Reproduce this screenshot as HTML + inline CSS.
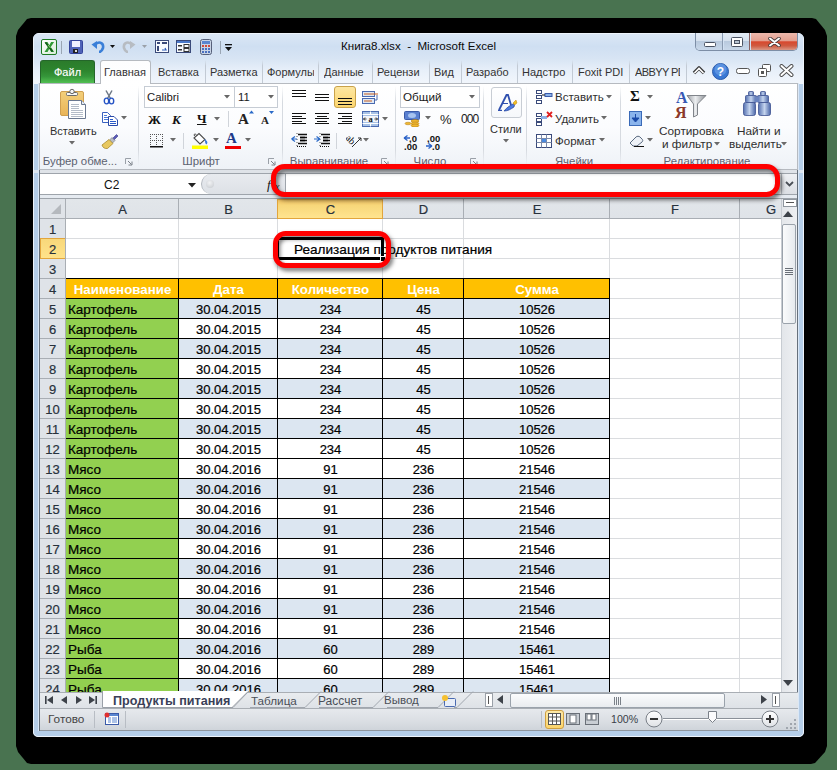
<!DOCTYPE html><html><head><meta charset="utf-8"><style>
*{box-sizing:border-box;margin:0;padding:0}
html,body{width:837px;height:770px;overflow:hidden;background:#497350;font-family:"Liberation Sans",sans-serif}
.abs{position:absolute}
.t{position:absolute;white-space:nowrap;line-height:1}
.g .t{-webkit-text-stroke:0.2px currentColor}
#shadow{position:absolute;left:16px;top:18px;width:811px;height:746px;background:#000;clip-path:polygon(0px 18px,1px 15px,2px 12px,11px 1px,15px 0px,796px 0px,800px 1px,809px 12px,810px 15px,811px 18px,811px 728px,810px 731px,809px 734px,799px 745px,795px 746px,15px 746px,11px 745px,2px 734px,1px 731px,0px 728px)}
#win{position:absolute;left:33px;top:33px;width:771px;height:704px;background:#b5cee9;border-radius:6px 6px 5px 5px;overflow:hidden}
.ui{font-size:11px;color:#3b3b3b}
.glabel{font-size:11.4px;color:#5c6270}
.cell{position:absolute;font-size:13.5px;color:#000;white-space:nowrap;line-height:20px;height:20px}
</style></head><body>
<div id="shadow"></div>
<div id="win"></div>
<div class="abs" style="left:0;top:0;width:837px;height:770px">
<div class="abs" style="left:34px;top:34px;width:769px;height:50px;background:linear-gradient(#dbe7f5,#cfdff2 25%,#d8e5f4 50%,#e7eff9 72%,#f2f6fc 100%);border-radius:5px 5px 0 0"></div>
<div class="abs" style="left:33px;top:33px;width:771px;height:704px;border:1px solid #eef4fb;border-radius:6px 6px 5px 5px"></div>
<svg class="abs" style="left:41px;top:39px" width="17" height="16" viewBox="0 0 17 16"><defs><linearGradient id="xl" x1="0" y1="0" x2="1" y2="1"><stop offset="0" stop-color="#ffffff"/><stop offset="1" stop-color="#d8ecd8"/></linearGradient></defs><rect x="0.5" y="0.5" width="15" height="15" rx="1.5" fill="url(#xl)" stroke="#1f7a24"/><path d="M3.5 3h3l1.8 3.2 1.8-3.2h3l-3.3 5 3.3 5h-3l-1.8-3.2-1.8 3.2h-3l3.3-5z" fill="#2f9a34"/><path d="M4.5 3.5 L11.5 12.5" stroke="#155a18" stroke-width="1.6"/><path d="M7 6 L9.5 9" stroke="#8adc70" stroke-width="1"/></svg>
<div class="abs" style="left:61px;top:41px;width:1px;height:13px;background:#9aa6b4"></div>
<svg class="abs" style="left:69px;top:40px" width="14" height="14" viewBox="0 0 14 14"><rect x="0.5" y="0.5" width="13" height="13" rx="1" fill="#4f63b8" stroke="#34449a"/><rect x="3" y="1" width="8" height="6" fill="#eef0ff"/><rect x="4" y="9" width="5" height="4" fill="#222"/><rect x="6" y="10" width="2" height="2" fill="#ddd"/></svg>
<svg class="abs" style="left:91px;top:40px" width="14" height="13" viewBox="0 0 14 13"><path d="M4 5 C7 1,13 2,12 8 C11 11,9 12,8 12" fill="none" stroke="#3a7fd8" stroke-width="2.6"/><path d="M0.5 4.5 L6 1 L6 9 Z" fill="#3a7fd8"/></svg>
<svg class="abs" style="left:110px;top:45px" width="6" height="4" viewBox="0 0 6 4"><path d="M0 0h5l-2.5 3z" fill="#111"/></svg>
<svg class="abs" style="left:122px;top:40px" width="14" height="13" viewBox="0 0 14 13"><path d="M10 5 C7 1,1 2,2 8 C3 11,5 12,6 12" fill="none" stroke="#b7bcc2" stroke-width="2.6"/><path d="M13.5 4.5 L8 1 L8 9 Z" fill="#b7bcc2"/></svg>
<svg class="abs" style="left:142px;top:45px" width="6" height="4" viewBox="0 0 6 4"><path d="M0 0h5l-2.5 3z" fill="#9aa0a8"/></svg>
<svg class="abs" style="left:155px;top:40px" width="14" height="13" viewBox="0 0 14 13"><rect x="0.5" y="0.5" width="13" height="12" fill="#f8fbff" stroke="#3a4a7a"/><rect x="2" y="2" width="3" height="2" fill="#3a4a7a"/><rect x="7" y="2" width="5" height="2" fill="#3a4a7a"/><rect x="2" y="6" width="2" height="5" fill="#3a4a7a"/><path d="M7 10h4l-1-2" fill="none" stroke="#2a5ab8" stroke-width="1.2"/></svg>
<svg class="abs" style="left:176px;top:40px" width="15" height="13" viewBox="0 0 15 13"><rect x="0.5" y="0.5" width="14" height="12" fill="#f8fbff" stroke="#3a4a7a"/><rect x="1" y="1" width="13" height="2" fill="#4a78c8"/><rect x="2" y="5" width="4" height="1.5" fill="#333"/><rect x="8" y="4.5" width="5" height="3" fill="none" stroke="#333"/><rect x="2" y="9" width="4" height="1.5" fill="#333"/><rect x="8" y="8.5" width="5" height="3" fill="none" stroke="#333"/></svg>
<svg class="abs" style="left:200px;top:39px" width="12" height="16" viewBox="0 0 12 16"><rect x="0.5" y="0.5" width="11" height="15" rx="2" fill="#c8d4e6" stroke="#56607a"/><rect x="2" y="2" width="8" height="3" fill="#5a86d0"/><g fill="#d04a3a"><rect x="2" y="6" width="2" height="2"/><rect x="5" y="6" width="2" height="2"/><rect x="8" y="6" width="2" height="2"/></g><g fill="#4a70c0"><rect x="2" y="9" width="2" height="2"/><rect x="5" y="9" width="2" height="2"/><rect x="8" y="9" width="2" height="2"/><rect x="2" y="12" width="2" height="2"/><rect x="5" y="12" width="2" height="2"/><rect x="8" y="12" width="2" height="2"/></g></svg>
<div class="abs" style="left:220px;top:41px;width:1px;height:13px;background:#9aa6b4"></div>
<svg class="abs" style="left:225px;top:44px" width="8" height="8" viewBox="0 0 8 8"><rect x="0" y="0" width="7" height="1.3" fill="#111"/><path d="M0 3h7l-3.5 4z" fill="#111"/></svg>
<div class="t" style="left:341px;top:40px;font-size:11.6px;color:#0a0a0a">Книга8.xlsx&nbsp; -&nbsp; Microsoft Excel</div>
<div class="abs" style="left:695px;top:33px;width:103px;height:18px;border:1px solid #7d8ea6;border-top:none;border-radius:0 0 5px 5px;overflow:hidden"><div class="abs" style="left:0;top:0;width:27px;height:17px;background:linear-gradient(#e3ebf5,#d6e1ee 45%,#b9cade 50%,#c9d8ea);border-right:1px solid #8a9ab0"></div><div class="abs" style="left:28px;top:0;width:26px;height:17px;background:linear-gradient(#e3ebf5,#d6e1ee 45%,#b9cade 50%,#c9d8ea);border-right:1px solid #8a6060"></div><div class="abs" style="left:55px;top:0;width:48px;height:17px;background:linear-gradient(#ecb8ac,#e3a090 45%,#d8482e 52%,#cf5a40 75%,#d99886)"></div></div>
<svg class="abs" style="left:704px;top:42px" width="12" height="5" viewBox="0 0 12 5"><rect x="0.5" y="0.5" width="11" height="4" rx="1" fill="#fff" stroke="#4a5262"/></svg>
<svg class="abs" style="left:731px;top:37px" width="12" height="10" viewBox="0 0 12 10"><rect x="0.5" y="0.5" width="11" height="9" rx="1" fill="#fff" stroke="#4a5262"/><rect x="3.5" y="3.5" width="5" height="3" fill="#b8c4d2" stroke="#4a5262"/></svg>
<svg class="abs" style="left:768px;top:37px" width="13" height="10" viewBox="0 0 13 10"><path d="M2 1.5 L11 8.5 M11 1.5 L2 8.5" stroke="#4a3a3a" stroke-width="3.6" stroke-linecap="round"/><path d="M2 1.5 L11 8.5 M11 1.5 L2 8.5" stroke="#fff" stroke-width="2" stroke-linecap="round"/></svg>
<div class="abs" style="left:40px;top:60px;width:55px;height:23px;background:linear-gradient(#2b7b2b,#2d862e 45%,#35963a 70%,#52c052 100%);border:1px solid #24662a;border-bottom:none;border-radius:3px 3px 0 0"></div>
<div class="t" style="left:54px;top:67px;font-size:11px;color:#fff;text-shadow:0 0 1px rgba(255,255,255,.4)">Файл</div>
<div class="abs" style="left:100px;top:60px;width:51px;height:24px;background:linear-gradient(#fdfdfe,#fff);border:1px solid #b6bac0;border-bottom:none;border-radius:3px 3px 0 0;z-index:2"></div>
<div class="t" style="left:104px;top:67px;font-size:11px;color:#333;z-index:3">Главная</div>
<div class="t" style="left:158px;top:67px;font-size:11px;color:#333;width:45px;overflow:hidden">Вставка</div>
<div class="abs" style="left:205px;top:60px;width:1px;height:23px;background:linear-gradient(rgba(200,208,218,0),#c2cad4 25%,#c2cad4)"></div>
<div class="t" style="left:210px;top:67px;font-size:11px;color:#333;width:48px;overflow:hidden">Разметка</div>
<div class="abs" style="left:262px;top:60px;width:1px;height:23px;background:linear-gradient(rgba(200,208,218,0),#c2cad4 25%,#c2cad4)"></div>
<div class="t" style="left:267px;top:67px;font-size:11px;color:#333;width:47px;overflow:hidden">Формулы</div>
<div class="abs" style="left:318px;top:60px;width:1px;height:23px;background:linear-gradient(rgba(200,208,218,0),#c2cad4 25%,#c2cad4)"></div>
<div class="t" style="left:324px;top:67px;font-size:11px;color:#333;width:46px;overflow:hidden">Данные</div>
<div class="abs" style="left:372px;top:60px;width:1px;height:23px;background:linear-gradient(rgba(200,208,218,0),#c2cad4 25%,#c2cad4)"></div>
<div class="t" style="left:377px;top:67px;font-size:11px;color:#333;width:50px;overflow:hidden">Рецензи</div>
<div class="abs" style="left:429px;top:60px;width:1px;height:23px;background:linear-gradient(rgba(200,208,218,0),#c2cad4 25%,#c2cad4)"></div>
<div class="t" style="left:434px;top:67px;font-size:11px;color:#333;width:25px;overflow:hidden">Вид</div>
<div class="abs" style="left:461px;top:60px;width:1px;height:23px;background:linear-gradient(rgba(200,208,218,0),#c2cad4 25%,#c2cad4)"></div>
<div class="t" style="left:466px;top:67px;font-size:11px;color:#333;width:49px;overflow:hidden">Разрабо</div>
<div class="abs" style="left:517px;top:60px;width:1px;height:23px;background:linear-gradient(rgba(200,208,218,0),#c2cad4 25%,#c2cad4)"></div>
<div class="t" style="left:522px;top:67px;font-size:11px;color:#333;width:48px;overflow:hidden">Надстро</div>
<div class="abs" style="left:572px;top:60px;width:1px;height:23px;background:linear-gradient(rgba(200,208,218,0),#c2cad4 25%,#c2cad4)"></div>
<div class="t" style="left:578px;top:67px;font-size:11px;color:#333;width:49px;overflow:hidden">Foxit PDI</div>
<div class="abs" style="left:629px;top:60px;width:1px;height:23px;background:linear-gradient(rgba(200,208,218,0),#c2cad4 25%,#c2cad4)"></div>
<div class="t" style="left:635px;top:67px;font-size:11px;color:#333;width:45px;overflow:hidden;letter-spacing:-0.6px">ABBYY PD</div>
<div class="abs" style="left:686px;top:60px;width:1px;height:23px;background:linear-gradient(rgba(200,208,218,0),#c2cad4 25%,#c2cad4)"></div>
<svg class="abs" style="left:692px;top:65px" width="14" height="10" viewBox="0 0 14 10"><path d="M2 8 L7 3 L12 8" fill="none" stroke="#3a3a3a" stroke-width="3.6" stroke-linejoin="round"/><path d="M2.5 8 L7 3.5 L11.5 8" fill="none" stroke="#fff" stroke-width="1.6"/></svg>
<svg class="abs" style="left:712px;top:63px" width="17" height="17" viewBox="0 0 17 17"><circle cx="8.5" cy="8.5" r="8" fill="#3a78d4" stroke="#2a5aa8"/><circle cx="8.5" cy="6.5" r="6" fill="#6fa4ea" opacity=".6"/><text x="8.5" y="13" font-size="12" font-weight="700" text-anchor="middle" fill="#fff" font-family="Liberation Sans">?</text></svg>
<svg class="abs" style="left:736px;top:68px" width="14" height="6" viewBox="0 0 14 6"><rect x="0.5" y="0.5" width="13" height="5" rx="2" fill="#fff" stroke="#555"/></svg>
<svg class="abs" style="left:758px;top:64px" width="13" height="13" viewBox="0 0 13 13"><rect x="4.5" y="0.5" width="8" height="7" rx="1" fill="#fff" stroke="#555"/><rect x="0.5" y="4.5" width="8" height="8" rx="1" fill="#fff" stroke="#555"/><rect x="3" y="7" width="3" height="3" fill="#555"/></svg>
<svg class="abs" style="left:779px;top:64px" width="15" height="13" viewBox="0 0 15 13"><path d="M2.5 2 L12.5 11 M12.5 2 L2.5 11" stroke="#505050" stroke-width="4" stroke-linecap="round"/><path d="M2.5 2 L12.5 11 M12.5 2 L2.5 11" stroke="#fff" stroke-width="2" stroke-linecap="round"/></svg>
<div class="abs" style="left:39px;top:83px;width:759px;height:87px;background:linear-gradient(#fff,#fbfcfe 50%,#eef2f7);border:1px solid #b6bac0;z-index:1"></div>
<div class="abs" style="left:34px;top:170px;width:769px;height:3px;background:#dde5ee"></div>
<div class="abs" style="left:138px;top:86px;width:1px;height:80px;background:linear-gradient(rgba(220,224,230,0),#d6dae0 20%,#d6dae0 80%,rgba(220,224,230,0));z-index:2"></div>
<div class="abs" style="left:282px;top:86px;width:1px;height:80px;background:linear-gradient(rgba(220,224,230,0),#d6dae0 20%,#d6dae0 80%,rgba(220,224,230,0));z-index:2"></div>
<div class="abs" style="left:395px;top:86px;width:1px;height:80px;background:linear-gradient(rgba(220,224,230,0),#d6dae0 20%,#d6dae0 80%,rgba(220,224,230,0));z-index:2"></div>
<div class="abs" style="left:483px;top:86px;width:1px;height:80px;background:linear-gradient(rgba(220,224,230,0),#d6dae0 20%,#d6dae0 80%,rgba(220,224,230,0));z-index:2"></div>
<div class="abs" style="left:526px;top:86px;width:1px;height:80px;background:linear-gradient(rgba(220,224,230,0),#d6dae0 20%,#d6dae0 80%,rgba(220,224,230,0));z-index:2"></div>
<div class="abs" style="left:620px;top:86px;width:1px;height:80px;background:linear-gradient(rgba(220,224,230,0),#d6dae0 20%,#d6dae0 80%,rgba(220,224,230,0));z-index:2"></div>
<div class="t glabel" style="left:20px;width:120px;text-align:center;top:156px;z-index:3">Буфер обме...</div>
<div class="t glabel" style="left:141px;width:120px;text-align:center;top:156px;z-index:3">Шрифт</div>
<div class="t glabel" style="left:269px;width:120px;text-align:center;top:156px;z-index:3">Выравнивание</div>
<div class="t glabel" style="left:370px;width:120px;text-align:center;top:156px;z-index:3">Число</div>
<div class="t glabel" style="left:514px;width:120px;text-align:center;top:156px;z-index:3">Ячейки</div>
<div class="t glabel" style="left:647px;width:120px;text-align:center;top:156px;z-index:3">Редактирование</div>
<svg class="abs" style="left:125px;top:158px;z-index:3" width="8" height="8" viewBox="0 0 8 8"><path d="M0.5 6V0.5H6" stroke="#9aa0a8" fill="none"/><path d="M3 3L6.5 6.5M7 3.5v3.5h-3.5" stroke="#7a8088" fill="none"/></svg>
<svg class="abs" style="left:268px;top:158px;z-index:3" width="8" height="8" viewBox="0 0 8 8"><path d="M0.5 6V0.5H6" stroke="#9aa0a8" fill="none"/><path d="M3 3L6.5 6.5M7 3.5v3.5h-3.5" stroke="#7a8088" fill="none"/></svg>
<svg class="abs" style="left:381px;top:158px;z-index:3" width="8" height="8" viewBox="0 0 8 8"><path d="M0.5 6V0.5H6" stroke="#9aa0a8" fill="none"/><path d="M3 3L6.5 6.5M7 3.5v3.5h-3.5" stroke="#7a8088" fill="none"/></svg>
<svg class="abs" style="left:470px;top:158px;z-index:3" width="8" height="8" viewBox="0 0 8 8"><path d="M0.5 6V0.5H6" stroke="#9aa0a8" fill="none"/><path d="M3 3L6.5 6.5M7 3.5v3.5h-3.5" stroke="#7a8088" fill="none"/></svg>
<svg class="abs" style="left:59px;top:88px;z-index:3" width="29" height="32" viewBox="0 0 29 32"><defs><linearGradient id="cb" x1="0" y1="0" x2="0" y2="1"><stop offset="0" stop-color="#f3cf7a"/><stop offset="1" stop-color="#e8b458"/></linearGradient></defs><rect x="1.5" y="3.5" width="23" height="24" rx="1.5" fill="url(#cb)" stroke="#cf9f50"/><rect x="7.5" y="4.5" width="11" height="3" rx="1" fill="#f6f6f6" stroke="#6a6a6a"/><circle cx="13" cy="3.5" r="2.2" fill="#f6f6f6" stroke="#6a6a6a"/><path d="M9.5 12.5H22.5L26.5 16.5V30.5H9.5Z" fill="#fff" stroke="#6a7890"/><path d="M22.5 12.5V16.5H26.5" fill="#e8ecf2" stroke="#6a7890"/><g stroke="#b4bcc8"><path d="M12 16.5h8M12 18.5h8M12 20.5h8M12 22.5h12M12 24.5h12M12 26.5h12M12 28.5h12"/></g></svg>
<div class="t" style="left:50px;top:126px;font-size:11px;color:#2f2f2f;z-index:3">Вставить</div>
<svg class="abs" style="left:69px;top:141px;z-index:3" width="7" height="4" viewBox="0 0 7 4"><path d="M0 0h6l-3 3.5z" fill="#6a6a6a"/></svg>
<svg class="abs" style="left:103px;top:90px;z-index:3" width="12" height="15" viewBox="0 0 12 15"><path d="M3 0.5 L7.5 8.5 M9 0.5 L4.5 8.5" stroke="#6e7886" stroke-width="1.5"/><ellipse cx="3.5" cy="11" rx="2.2" ry="2.9" fill="none" stroke="#2452c4" stroke-width="1.4"/><ellipse cx="8.5" cy="11" rx="2.2" ry="2.9" fill="none" stroke="#2452c4" stroke-width="1.4"/></svg>
<svg class="abs" style="left:102px;top:112px;z-index:3" width="16" height="14" viewBox="0 0 16 14"><path d="M0.5 0.5H5.5L8.5 3.5V10.5H0.5Z" fill="#fff" stroke="#3a62c0"/><path d="M2 3.5h3M2 5.5h5M2 7.5h5" stroke="#4a7ad8"/><path d="M6.5 4.5H12L15.5 8V13.5H6.5Z" fill="#fff" stroke="#2a4aa8"/><path d="M8 7.5h3M8 9.5h6M8 11.5h6" stroke="#2a5ac8" stroke-width="1.2"/></svg>
<svg class="abs" style="left:121px;top:116px;z-index:3" width="7" height="4" viewBox="0 0 7 4"><path d="M0 0h6l-3 3.5z" fill="#6a6a6a"/></svg>
<svg class="abs" style="left:101px;top:133px;z-index:3" width="18" height="16" viewBox="0 0 18 16"><path d="M11 6 L15.5 1.5 L17 3 L12.5 7.5Z" fill="#5a5ab8" stroke="#3a3a88" stroke-width=".6"/><path d="M8.5 7 L11 4.5 L14 7.5 L11.5 10Z" fill="#b8bcc4" stroke="#6a6e78" stroke-width=".6"/><path d="M1 12 L8 6.5 L12 10.5 L6.5 15.5 C4 16,1.5 14.5,1 12Z" fill="#e8c860" stroke="#a88a30" stroke-width=".8"/></svg>
<div class="abs" style="left:144px;top:86px;width:91px;height:22px;background:#fff;border:1px solid #c6ccd4;z-index:3"></div>
<div class="abs" style="left:234px;top:86px;width:44px;height:22px;background:#fff;border:1px solid #c6ccd4;z-index:3"></div>
<div class="t" style="left:147px;top:92px;font-size:11.3px;color:#1a1a1a;z-index:3">Calibri</div>
<svg class="abs" style="left:224px;top:95px;z-index:3" width="7" height="4" viewBox="0 0 7 4"><path d="M0 0h6l-3 3.5z" fill="#666"/></svg>
<div class="t" style="left:238px;top:92px;font-size:11.3px;color:#1a1a1a;z-index:3">11</div>
<svg class="abs" style="left:268px;top:95px;z-index:3" width="7" height="4" viewBox="0 0 7 4"><path d="M0 0h6l-3 3.5z" fill="#666"/></svg>
<div class="t" style="left:148px;top:113px;font-size:13px;color:#111;z-index:3;font-family:Liberation Serif;font-weight:700">Ж</div>
<div class="t" style="left:172px;top:113px;font-size:13px;color:#111;z-index:3;font-family:Liberation Serif;font-weight:700;font-style:italic">К</div>
<div class="t" style="left:197px;top:112px;font-size:13px;color:#111;z-index:3;font-family:Liberation Serif;font-weight:700;text-decoration:underline">Ч</div>
<svg class="abs" style="left:214px;top:117px;z-index:3" width="7" height="4" viewBox="0 0 7 4"><path d="M0 0h6l-3 3.5z" fill="#6a6a6a"/></svg>
<div class="abs" style="left:228px;top:111px;width:1px;height:16px;background:#d0d4da;z-index:3"></div>
<div class="t" style="left:238px;top:112px;font-size:15px;color:#222;z-index:3;font-family:Liberation Serif;font-weight:700">A</div>
<svg class="abs" style="left:249px;top:110px;z-index:3" width="5" height="4" viewBox="0 0 5 4"><path d="M0 3.5h5l-2.5-3z" fill="#2a6ac8"/></svg>
<div class="t" style="left:261px;top:115px;font-size:11px;color:#222;z-index:3;font-family:Liberation Serif;font-weight:700">A</div>
<svg class="abs" style="left:269px;top:111px;z-index:3" width="5" height="4" viewBox="0 0 5 4"><path d="M0 0h5l-2.5 3z" fill="#2a6ac8"/></svg>
<svg class="abs" style="left:150px;top:134px;z-index:3" width="13" height="14" viewBox="0 0 13 14"><g fill="#555"><rect x="0" y="0" width="1" height="1"/><rect x="2" y="0" width="1" height="1"/><rect x="4" y="0" width="1" height="1"/><rect x="6" y="0" width="1" height="1"/><rect x="8" y="0" width="1" height="1"/><rect x="10" y="0" width="1" height="1"/><rect x="12" y="0" width="1" height="1"/><rect x="0" y="6" width="1" height="1"/><rect x="2" y="6" width="1" height="1"/><rect x="4" y="6" width="1" height="1"/><rect x="6" y="6" width="1" height="1"/><rect x="8" y="6" width="1" height="1"/><rect x="10" y="6" width="1" height="1"/><rect x="12" y="6" width="1" height="1"/><rect x="0" y="0" width="1" height="1"/><rect x="6" y="0" width="1" height="1"/><rect x="12" y="0" width="1" height="1"/><rect x="0" y="2" width="1" height="1"/><rect x="6" y="2" width="1" height="1"/><rect x="12" y="2" width="1" height="1"/><rect x="0" y="4" width="1" height="1"/><rect x="6" y="4" width="1" height="1"/><rect x="12" y="4" width="1" height="1"/><rect x="0" y="6" width="1" height="1"/><rect x="6" y="6" width="1" height="1"/><rect x="12" y="6" width="1" height="1"/><rect x="0" y="8" width="1" height="1"/><rect x="6" y="8" width="1" height="1"/><rect x="12" y="8" width="1" height="1"/><rect x="0" y="10" width="1" height="1"/><rect x="6" y="10" width="1" height="1"/><rect x="12" y="10" width="1" height="1"/></g><rect x="0" y="12" width="13" height="1.5" fill="#111"/></svg>
<svg class="abs" style="left:170px;top:138px;z-index:3" width="7" height="4" viewBox="0 0 7 4"><path d="M0 0h6l-3 3.5z" fill="#6a6a6a"/></svg>
<div class="abs" style="left:183px;top:133px;width:1px;height:16px;background:#d0d4da;z-index:3"></div>
<svg class="abs" style="left:191px;top:132px;z-index:3" width="18" height="17" viewBox="0 0 18 17"><path d="M3 6 L8 1.5 L14 7.5 L9 12 Z" fill="#fff" stroke="#4a4a4a" stroke-width="1.1"/><path d="M6 3.5 C4 1,2.5 2,3.5 4" fill="none" stroke="#4a4a4a"/><path d="M13 7 C16 8,17 10,16 12 C15 13,14 11,14 9Z" fill="#3a7ad8"/><rect x="1" y="13.5" width="16" height="3.5" fill="#ffff00"/></svg>
<svg class="abs" style="left:213px;top:138px;z-index:3" width="7" height="4" viewBox="0 0 7 4"><path d="M0 0h6l-3 3.5z" fill="#6a6a6a"/></svg>
<div class="t" style="left:226px;top:131px;font-size:15px;color:#1d3a8a;z-index:3;font-family:Liberation Serif;font-weight:700">A</div>
<div class="abs" style="left:225px;top:146px;width:16px;height:3px;background:#e00;z-index:3"></div>
<svg class="abs" style="left:245px;top:138px;z-index:3" width="7" height="4" viewBox="0 0 7 4"><path d="M0 0h6l-3 3.5z" fill="#6a6a6a"/></svg>
<svg class="abs" style="left:292px;top:90px;z-index:3" width="14" height="8" viewBox="0 0 14 8"><rect x="0" y="0" width="14" height="1" fill="#111"/><rect x="0" y="3" width="14" height="1" fill="#111"/><rect x="0" y="6" width="14" height="1" fill="#111"/></svg>
<svg class="abs" style="left:315px;top:94px;z-index:3" width="14" height="8" viewBox="0 0 14 8"><rect x="0" y="0" width="14" height="1" fill="#111"/><rect x="0" y="3" width="14" height="1" fill="#111"/><rect x="0" y="6" width="14" height="1" fill="#111"/></svg>
<div class="abs" style="left:334px;top:86px;width:22px;height:22px;background:linear-gradient(#fde7a2,#fcd56e);border:1px solid #c9a24a;border-radius:3px;z-index:3"></div>
<svg class="abs" style="left:338px;top:98px;z-index:3" width="14" height="8" viewBox="0 0 14 8"><rect x="0" y="0" width="14" height="1" fill="#111"/><rect x="0" y="3" width="14" height="1" fill="#111"/><rect x="0" y="6" width="14" height="1" fill="#111"/></svg>
<svg class="abs" style="left:362px;top:89px;z-index:3" width="17" height="16" viewBox="0 0 17 16"><rect x="0.5" y="2.5" width="12" height="5" fill="#dfe8f4" stroke="#4a6ab0"/><rect x="0.5" y="9.5" width="12" height="5" fill="#dfe8f4" stroke="#4a6ab0"/><path d="M2 5h14" stroke="#c86020"/><path d="M2 12h8" stroke="#c86020"/><path d="M15 6v5h-3" fill="none" stroke="#4a6ab0"/></svg>
<svg class="abs" style="left:292px;top:113px;z-index:3" width="14" height="12" viewBox="0 0 14 12"><rect x="0" y="0" width="14" height="1" fill="#111"/><rect x="0" y="3" width="10" height="1" fill="#111"/><rect x="0" y="5" width="14" height="1" fill="#111"/><rect x="0" y="8" width="10" height="1" fill="#111"/><rect x="0" y="10" width="14" height="1" fill="#111"/></svg>
<svg class="abs" style="left:315px;top:113px;z-index:3" width="14" height="12" viewBox="0 0 14 12"><rect x="0" y="0" width="14" height="1" fill="#111"/><rect x="2" y="3" width="10" height="1" fill="#111"/><rect x="0" y="5" width="14" height="1" fill="#111"/><rect x="2" y="8" width="10" height="1" fill="#111"/><rect x="0" y="10" width="14" height="1" fill="#111"/></svg>
<svg class="abs" style="left:338px;top:113px;z-index:3" width="14" height="12" viewBox="0 0 14 12"><rect x="0" y="0" width="14" height="1" fill="#111"/><rect x="4" y="3" width="10" height="1" fill="#111"/><rect x="0" y="5" width="14" height="1" fill="#111"/><rect x="4" y="8" width="10" height="1" fill="#111"/><rect x="0" y="10" width="14" height="1" fill="#111"/></svg>
<svg class="abs" style="left:362px;top:111px;z-index:3" width="17" height="16" viewBox="0 0 17 16"><rect x="0.5" y="0.5" width="16" height="15" fill="#a8c2e6" stroke="#4a6ab0"/><path d="M0.5 3.5h16M0.5 12.5h16M8.5 0.5v3M8.5 12.5v3" stroke="#fff"/><rect x="1" y="5" width="15" height="6" fill="#f4f6fa"/><text x="8.5" y="10.6" font-size="8.5" font-weight="700" text-anchor="middle" fill="#111" font-family="Liberation Serif">a</text><path d="M1.5 8h3M12.5 8h3M1.5 8l1.5-1.5M1.5 8l1.5 1.5M15.5 8l-1.5-1.5M15.5 8l-1.5 1.5" stroke="#222" stroke-width=".9"/></svg>
<svg class="abs" style="left:382px;top:117px;z-index:3" width="7" height="4" viewBox="0 0 7 4"><path d="M0 0h6l-3 3.5z" fill="#6a6a6a"/></svg>
<svg class="abs" style="left:291px;top:133px;z-index:3" width="16" height="15" viewBox="0 0 16 15"><path d="M7 1.5h9M9 4.5h7M9 7.5h7M7 10.5h9" stroke="#111" stroke-width="1.3"/><path d="M9 4.5h5M9 7.5h5" stroke="#000" stroke-width="1.6"/><path d="M6 13.5h10" stroke="#111" stroke-dasharray="1 1"/><path d="M6 0v15" stroke="#555" stroke-dasharray="1 2"/><path d="M0.5 6 L4 3.5 M0.5 6 L4 8.5 M0.5 6H6" stroke="#2a6ac8" stroke-width="1.2" fill="none"/></svg>
<svg class="abs" style="left:314px;top:133px;z-index:3" width="16" height="15" viewBox="0 0 16 15"><path d="M7 1.5h9M9 4.5h7M9 7.5h7M7 10.5h9" stroke="#111" stroke-width="1.3"/><path d="M9 4.5h5M9 7.5h5" stroke="#000" stroke-width="1.6"/><path d="M6 13.5h10" stroke="#111" stroke-dasharray="1 1"/><path d="M6 0v15" stroke="#555" stroke-dasharray="1 2"/><path d="M6 6 L2.5 3.5 M6 6 L2.5 8.5 M0 6H6" stroke="#2a6ac8" stroke-width="1.2" fill="none"/></svg>
<div class="abs" style="left:336px;top:133px;width:1px;height:16px;background:#d0d4da;z-index:3"></div>
<svg class="abs" style="left:346px;top:133px;z-index:3" width="17" height="15" viewBox="0 0 17 15"><text x="0" y="11" font-size="10" font-weight="400" fill="#111" transform="rotate(45 6 7)" font-family="Liberation Serif">ab</text><path d="M6 14 L15 5" stroke="#333"/><path d="M15 5l-3 0 M15 5l0 3" stroke="#333"/></svg>
<svg class="abs" style="left:363px;top:138px;z-index:3" width="7" height="4" viewBox="0 0 7 4"><path d="M0 0h6l-3 3.5z" fill="#6a6a6a"/></svg>
<div class="abs" style="left:400px;top:86px;width:80px;height:22px;background:#fff;border:1px solid #c6ccd4;z-index:3"></div>
<div class="t" style="left:403px;top:91px;font-size:11.7px;color:#1a1a1a;z-index:3">Общий</div>
<svg class="abs" style="left:469px;top:95px;z-index:3" width="7" height="4" viewBox="0 0 7 4"><path d="M0 0h6l-3 3.5z" fill="#666"/></svg>
<svg class="abs" style="left:404px;top:111px;z-index:3" width="17" height="16" viewBox="0 0 17 16"><rect x="0.5" y="0.5" width="15" height="8" rx="1" fill="#5a80d0" stroke="#3a5aa8"/><ellipse cx="8" cy="4.5" rx="4" ry="2.5" fill="#a8c4f0"/><g fill="#f0b830" stroke="#b07810" stroke-width=".5"><ellipse cx="11" cy="10" rx="4" ry="1.5"/><ellipse cx="11" cy="12.5" rx="4" ry="1.5"/><ellipse cx="11" cy="14.5" rx="4" ry="1.5"/><ellipse cx="4" cy="12.5" rx="3" ry="1.3"/></g></svg>
<svg class="abs" style="left:425px;top:116px;z-index:3" width="7" height="4" viewBox="0 0 7 4"><path d="M0 0h6l-3 3.5z" fill="#6a6a6a"/></svg>
<div class="t" style="left:440px;top:113px;font-size:13px;color:#222;z-index:3">%</div>
<div class="t" style="left:461px;top:113px;font-size:12px;color:#222;z-index:3;letter-spacing:-0.9px">000</div>
<svg class="abs" style="left:403px;top:134px;z-index:3" width="20" height="16" viewBox="0 0 20 16"><path d="M1 4 L4.5 1.5 M1 4 L4.5 6.5 M1 4h6" stroke="#2a62c8" stroke-width="1.3" fill="none"/><text x="6" y="8" font-size="9.5" font-weight="700" fill="#111" font-family="Liberation Sans">,0</text><text x="1" y="15.5" font-size="9.5" font-weight="700" fill="#111" font-family="Liberation Sans">,00</text></svg>
<svg class="abs" style="left:425px;top:134px;z-index:3" width="20" height="16" viewBox="0 0 20 16"><text x="2" y="8" font-size="9.5" font-weight="700" fill="#111" font-family="Liberation Sans">,00</text><path d="M1 12h6 M7 12 L3.5 9.5 M7 12 L3.5 14.5" stroke="#2a62c8" stroke-width="1.3" fill="none"/><text x="7" y="15.5" font-size="9.5" font-weight="700" fill="#111" font-family="Liberation Sans">,0</text></svg>
<div class="abs" style="left:491px;top:87px;width:31px;height:31px;background:linear-gradient(#fff,#f6f8fb);border:1px solid #c8cdd4;border-radius:3px;z-index:3"></div>
<svg class="abs" style="left:498px;top:94px;z-index:3" width="20" height="18" viewBox="0 0 20 18"><path d="M1 16 L8.5 1 L10 1 L13 11" fill="none" stroke="#2f4fae" stroke-width="1.8"/><path d="M0 16.3h4M5 9.5h5" stroke="#2f4fae" stroke-width="1.2"/><path d="M6 17 C9 13,13 11,17 9 L16 13 C13 15,10 17,6 17Z" fill="#4a7ae0" stroke="#24409a" stroke-width=".7"/><path d="M15 9 L18 6 L19 9 L16.5 11Z" fill="#f0c020" stroke="#c08010" stroke-width=".5"/></svg>
<div class="t" style="left:490px;top:124px;font-size:11px;color:#2f2f2f;z-index:3">Стили</div>
<svg class="abs" style="left:503px;top:139px;z-index:3" width="7" height="4" viewBox="0 0 7 4"><path d="M0 0h6l-3 3.5z" fill="#6a6a6a"/></svg>
<svg class="abs" style="left:536px;top:90px;z-index:3" width="17" height="14" viewBox="0 0 17 14"><rect x="0.5" y="0.5" width="5" height="3" fill="#fff" stroke="#3a4a7a"/><rect x="0.5" y="5.5" width="5" height="3" fill="#fff" stroke="#3a4a7a"/><rect x="0.5" y="10.5" width="5" height="3" fill="#fff" stroke="#3a4a7a"/><rect x="9" y="3.5" width="7" height="3" fill="#8ab0e8" stroke="#3a5aa8"/><path d="M6 5h3" stroke="#111"/></svg>
<div class="t" style="left:555px;top:92px;font-size:11.5px;color:#2f2f2f;z-index:3">Вставить</div>
<svg class="abs" style="left:606px;top:95px;z-index:3" width="7" height="4" viewBox="0 0 7 4"><path d="M0 0h6l-3 3.5z" fill="#6a6a6a"/></svg>
<svg class="abs" style="left:536px;top:111px;z-index:3" width="17" height="15" viewBox="0 0 17 15"><rect x="0.5" y="2.5" width="5" height="3" fill="#fff" stroke="#3a4a7a"/><rect x="0.5" y="7.5" width="5" height="3" fill="#fff" stroke="#3a4a7a"/><rect x="0.5" y="11.5" width="5" height="3" fill="#fff" stroke="#3a4a7a"/><rect x="5" y="5" width="6" height="3" fill="#8ab0e8"/><path d="M11 1 L16 6 M16 1 L11 6" stroke="#e02020" stroke-width="1.8"/></svg>
<div class="t" style="left:555px;top:114px;font-size:11.5px;color:#2f2f2f;z-index:3">Удалить</div>
<svg class="abs" style="left:601px;top:116px;z-index:3" width="7" height="4" viewBox="0 0 7 4"><path d="M0 0h6l-3 3.5z" fill="#6a6a6a"/></svg>
<svg class="abs" style="left:536px;top:133px;z-index:3" width="17" height="15" viewBox="0 0 17 15"><rect x="0.5" y="1.5" width="15" height="13" fill="#fff" stroke="#3a4a7a"/><path d="M0.5 5.5h15M0.5 9.5h15M5.5 1.5v13M10.5 1.5v13" stroke="#7a8aaa"/><rect x="6" y="6" width="4" height="3" fill="#4a8ae0"/></svg>
<div class="t" style="left:555px;top:136px;font-size:11.5px;color:#2f2f2f;z-index:3">Формат</div>
<svg class="abs" style="left:599px;top:138px;z-index:3" width="7" height="4" viewBox="0 0 7 4"><path d="M0 0h6l-3 3.5z" fill="#6a6a6a"/></svg>
<div class="t" style="left:630px;top:89px;font-size:15px;color:#111;z-index:3;font-weight:700;font-family:Liberation Serif">Σ</div>
<svg class="abs" style="left:647px;top:95px;z-index:3" width="7" height="4" viewBox="0 0 7 4"><path d="M0 0h6l-3 3.5z" fill="#6a6a6a"/></svg>
<svg class="abs" style="left:629px;top:111px;z-index:3" width="13" height="15" viewBox="0 0 13 15"><rect x="0.5" y="0.5" width="12" height="14" fill="#8ab4ec" stroke="#3a6ab8"/><path d="M6.5 3v6M3 7 L6.5 11 L10 7z" fill="#1a4aa8" stroke="#1a4aa8"/></svg>
<svg class="abs" style="left:645px;top:116px;z-index:3" width="7" height="4" viewBox="0 0 7 4"><path d="M0 0h6l-3 3.5z" fill="#6a6a6a"/></svg>
<svg class="abs" style="left:629px;top:135px;z-index:3" width="15" height="12" viewBox="0 0 15 12"><path d="M1 8 L7 2 C8 1,10 1,11 2 L13 4 C14 5,14 6,13 7 L8 11 L4 11z" fill="#eef2f8" stroke="#5a6a80"/><path d="M5 11.5h10" stroke="#111"/></svg>
<svg class="abs" style="left:647px;top:138px;z-index:3" width="7" height="4" viewBox="0 0 7 4"><path d="M0 0h6l-3 3.5z" fill="#6a6a6a"/></svg>
<svg class="abs" style="left:674px;top:88px;z-index:3" width="34" height="31" viewBox="0 0 34 31"><defs><linearGradient id="fn" x1="0" y1="0" x2="1" y2="0"><stop offset="0" stop-color="#9a9ea4"/><stop offset=".45" stop-color="#eceef0"/><stop offset="1" stop-color="#8a8e94"/></linearGradient></defs><path d="M13 7.5 H32 L23.5 16 V27 L19.5 29 V16 Z" fill="url(#fn)" stroke="#80848a"/><text x="2" y="15" font-size="16" font-weight="700" fill="#3658b4" font-family="Liberation Serif">A</text><text x="1" y="30" font-size="16" font-weight="700" fill="#8c3a2a" font-family="Liberation Serif">Я</text></svg>
<div class="t" style="left:659px;top:126px;font-size:11.8px;color:#2f2f2f;z-index:3">Сортировка</div>
<div class="t" style="left:662px;top:139px;font-size:11.8px;color:#2f2f2f;z-index:3">и фильтр</div>
<svg class="abs" style="left:714px;top:142px;z-index:3" width="7" height="4" viewBox="0 0 7 4"><path d="M0 0h6l-3 3.5z" fill="#6a6a6a"/></svg>
<svg class="abs" style="left:743px;top:91px;z-index:3" width="28" height="25" viewBox="0 0 28 25"><defs><linearGradient id="bn" x1="0" y1="0" x2="1" y2="0"><stop offset="0" stop-color="#5470b0"/><stop offset=".5" stop-color="#c4d4ee"/><stop offset="1" stop-color="#4a66a8"/></linearGradient></defs><g fill="url(#bn)" stroke="#3e5290" stroke-width=".8"><rect x="5.5" y="0.5" width="5" height="4" rx="1"/><rect x="17.5" y="0.5" width="5" height="4" rx="1"/><rect x="2.5" y="4.5" width="11" height="7" rx="1"/><rect x="14.5" y="4.5" width="11" height="7" rx="1"/><rect x="0.5" y="11.5" width="12" height="13" rx="2"/><rect x="15.5" y="11.5" width="12" height="13" rx="2"/></g><rect x="12" y="6" width="4" height="5" fill="#6a84c0"/></svg>
<div class="t" style="left:737px;top:126px;font-size:11.8px;color:#2f2f2f;z-index:3">Найти и</div>
<div class="t" style="left:729px;top:139px;font-size:11.8px;color:#2f2f2f;z-index:3">выделить</div>
<svg class="abs" style="left:781px;top:142px;z-index:3" width="7" height="4" viewBox="0 0 7 4"><path d="M0 0h6l-3 3.5z" fill="#6a6a6a"/></svg>
<div class="abs" style="left:39px;top:170px;width:759px;height:29px;background:#dfe3e8"></div>
<div class="abs" style="left:39px;top:173px;width:759px;height:1px;background:#9ea4ab"></div>
<div class="abs" style="left:39px;top:194px;width:759px;height:1px;background:#9ea4ab"></div>
<div class="abs" style="left:39px;top:195px;width:759px;height:3px;background:#e6ebf1"></div>
<div class="abs" style="left:39px;top:198px;width:759px;height:1px;background:#9ea4ab"></div>
<div class="abs" style="left:40px;top:174px;width:175px;height:20px;background:#fff"></div>
<div class="t" style="left:104px;top:179px;font-size:12px;color:#111;z-index:3">C2</div>
<svg class="abs" style="left:188px;top:183px" width="8" height="5" viewBox="0 0 8 5"><path d="M0 0h8l-4 4.5z" fill="#222"/></svg>
<div class="abs" style="left:201px;top:174px;width:90px;height:20px;background:linear-gradient(#e8ebef,#dde1e6);border:1px solid #b4b9c0;border-radius:10px 0 0 10px;border-right:none;border-top:none;border-bottom:none"></div>
<div class="abs" style="left:206px;top:180px;width:8px;height:8px;border-radius:4px;background:radial-gradient(circle at 45% 35%,#f2f3f5,#c4c8cd)"></div>
<div class="t" style="left:267px;top:178px;font-size:13px;color:#111;z-index:3;font-family:Liberation Serif"><i>f</i></div>
<div class="t" style="left:275px;top:182px;font-size:10px;color:#111;z-index:3;font-family:Liberation Serif"><i>x</i></div>
<div class="abs" style="left:285px;top:174px;width:496px;height:20px;background:#fff;border-left:1px solid #9ea4ab"></div>
<div class="abs" style="left:781px;top:174px;width:16px;height:20px;background:linear-gradient(#eef0f3,#dcdfe4);border-left:1px solid #b9bec5"></div>
<svg class="abs" style="left:785px;top:181px" width="9" height="6" viewBox="0 0 9 6"><path d="M1 1 L4.5 4.5 L8 1" fill="none" stroke="#4a4f56" stroke-width="1.8"/></svg>
<div class="abs g" style="left:40px;top:199px;width:741px;height:494px;background:#fff;overflow:hidden">
<div class="abs" style="left:0;top:0;width:741px;height:20px;background:linear-gradient(#e2e6ea,#dfe3e8);border-bottom:1px solid #a9aeb4"></div>
<div class="abs" style="left:0;top:0;width:26px;height:20px;background:#dfe3e8;border-right:1px solid #a9aeb4;border-bottom:1px solid #a9aeb4"></div>
<svg class="abs" style="left:11px;top:5px" width="11" height="11" viewBox="0 0 11 11"><path d="M10 0 L10 10 L0 10z" fill="#b5b9be"/></svg>
<div class="abs" style="left:138px;top:0;width:1px;height:20px;background:#a9aeb4"></div>
<div class="t" style="left:26px;width:113px;text-align:center;top:4px;font-size:13px;color:#27313c">A</div>
<div class="abs" style="left:237px;top:0;width:1px;height:20px;background:#a9aeb4"></div>
<div class="t" style="left:139px;width:99px;text-align:center;top:4px;font-size:13px;color:#27313c">B</div>
<div class="abs" style="left:237px;top:0;width:106px;height:20px;background:linear-gradient(#f2c464,#f8d77a 30%,#ffe48f);border:1px solid #e2a53c"></div>
<div class="t" style="left:238px;width:105px;text-align:center;top:4px;font-size:13px;color:#27313c">C</div>
<div class="abs" style="left:423px;top:0;width:1px;height:20px;background:#a9aeb4"></div>
<div class="t" style="left:343px;width:81px;text-align:center;top:4px;font-size:13px;color:#27313c">D</div>
<div class="abs" style="left:569px;top:0;width:1px;height:20px;background:#a9aeb4"></div>
<div class="t" style="left:424px;width:146px;text-align:center;top:4px;font-size:13px;color:#27313c">E</div>
<div class="abs" style="left:699px;top:0;width:1px;height:20px;background:#a9aeb4"></div>
<div class="t" style="left:570px;width:130px;text-align:center;top:4px;font-size:13px;color:#27313c">F</div>
<div class="abs" style="left:741px;top:0;width:1px;height:20px;background:#a9aeb4"></div>
<div class="t" style="left:701px;width:60px;text-align:center;top:4px;font-size:13px;color:#27313c">G</div>
<div class="abs" style="left:0;top:20px;width:25px;height:20px;background:#dfe3e8;border-bottom:1px solid #a9aeb4"></div>
<div class="t" style="left:0;width:25px;text-align:center;top:24px;font-size:13px;color:#27313c">1</div>
<div class="abs" style="left:0;top:39px;width:26px;height:21px;background:linear-gradient(#f8d87a,#ffe28a);border:1px solid #e2a53c"></div>
<div class="t" style="left:0;width:25px;text-align:center;top:44px;font-size:13px;color:#27313c">2</div>
<div class="abs" style="left:0;top:60px;width:25px;height:20px;background:#dfe3e8;border-bottom:1px solid #a9aeb4"></div>
<div class="t" style="left:0;width:25px;text-align:center;top:64px;font-size:13px;color:#27313c">3</div>
<div class="abs" style="left:0;top:80px;width:25px;height:20px;background:#dfe3e8;border-bottom:1px solid #a9aeb4"></div>
<div class="t" style="left:0;width:25px;text-align:center;top:84px;font-size:13px;color:#27313c">4</div>
<div class="abs" style="left:0;top:100px;width:25px;height:20px;background:#dfe3e8;border-bottom:1px solid #a9aeb4"></div>
<div class="t" style="left:0;width:25px;text-align:center;top:104px;font-size:13px;color:#27313c">5</div>
<div class="abs" style="left:0;top:120px;width:25px;height:20px;background:#dfe3e8;border-bottom:1px solid #a9aeb4"></div>
<div class="t" style="left:0;width:25px;text-align:center;top:124px;font-size:13px;color:#27313c">6</div>
<div class="abs" style="left:0;top:140px;width:25px;height:20px;background:#dfe3e8;border-bottom:1px solid #a9aeb4"></div>
<div class="t" style="left:0;width:25px;text-align:center;top:144px;font-size:13px;color:#27313c">7</div>
<div class="abs" style="left:0;top:160px;width:25px;height:20px;background:#dfe3e8;border-bottom:1px solid #a9aeb4"></div>
<div class="t" style="left:0;width:25px;text-align:center;top:164px;font-size:13px;color:#27313c">8</div>
<div class="abs" style="left:0;top:180px;width:25px;height:20px;background:#dfe3e8;border-bottom:1px solid #a9aeb4"></div>
<div class="t" style="left:0;width:25px;text-align:center;top:184px;font-size:13px;color:#27313c">9</div>
<div class="abs" style="left:0;top:200px;width:25px;height:20px;background:#dfe3e8;border-bottom:1px solid #a9aeb4"></div>
<div class="t" style="left:0;width:25px;text-align:center;top:204px;font-size:13px;color:#27313c">10</div>
<div class="abs" style="left:0;top:220px;width:25px;height:20px;background:#dfe3e8;border-bottom:1px solid #a9aeb4"></div>
<div class="t" style="left:0;width:25px;text-align:center;top:224px;font-size:13px;color:#27313c">11</div>
<div class="abs" style="left:0;top:240px;width:25px;height:20px;background:#dfe3e8;border-bottom:1px solid #a9aeb4"></div>
<div class="t" style="left:0;width:25px;text-align:center;top:244px;font-size:13px;color:#27313c">12</div>
<div class="abs" style="left:0;top:260px;width:25px;height:20px;background:#dfe3e8;border-bottom:1px solid #a9aeb4"></div>
<div class="t" style="left:0;width:25px;text-align:center;top:264px;font-size:13px;color:#27313c">13</div>
<div class="abs" style="left:0;top:280px;width:25px;height:20px;background:#dfe3e8;border-bottom:1px solid #a9aeb4"></div>
<div class="t" style="left:0;width:25px;text-align:center;top:284px;font-size:13px;color:#27313c">14</div>
<div class="abs" style="left:0;top:300px;width:25px;height:20px;background:#dfe3e8;border-bottom:1px solid #a9aeb4"></div>
<div class="t" style="left:0;width:25px;text-align:center;top:304px;font-size:13px;color:#27313c">15</div>
<div class="abs" style="left:0;top:320px;width:25px;height:20px;background:#dfe3e8;border-bottom:1px solid #a9aeb4"></div>
<div class="t" style="left:0;width:25px;text-align:center;top:324px;font-size:13px;color:#27313c">16</div>
<div class="abs" style="left:0;top:340px;width:25px;height:20px;background:#dfe3e8;border-bottom:1px solid #a9aeb4"></div>
<div class="t" style="left:0;width:25px;text-align:center;top:344px;font-size:13px;color:#27313c">17</div>
<div class="abs" style="left:0;top:360px;width:25px;height:20px;background:#dfe3e8;border-bottom:1px solid #a9aeb4"></div>
<div class="t" style="left:0;width:25px;text-align:center;top:364px;font-size:13px;color:#27313c">18</div>
<div class="abs" style="left:0;top:380px;width:25px;height:20px;background:#dfe3e8;border-bottom:1px solid #a9aeb4"></div>
<div class="t" style="left:0;width:25px;text-align:center;top:384px;font-size:13px;color:#27313c">19</div>
<div class="abs" style="left:0;top:400px;width:25px;height:20px;background:#dfe3e8;border-bottom:1px solid #a9aeb4"></div>
<div class="t" style="left:0;width:25px;text-align:center;top:404px;font-size:13px;color:#27313c">20</div>
<div class="abs" style="left:0;top:420px;width:25px;height:20px;background:#dfe3e8;border-bottom:1px solid #a9aeb4"></div>
<div class="t" style="left:0;width:25px;text-align:center;top:424px;font-size:13px;color:#27313c">21</div>
<div class="abs" style="left:0;top:440px;width:25px;height:20px;background:#dfe3e8;border-bottom:1px solid #a9aeb4"></div>
<div class="t" style="left:0;width:25px;text-align:center;top:444px;font-size:13px;color:#27313c">22</div>
<div class="abs" style="left:0;top:460px;width:25px;height:20px;background:#dfe3e8;border-bottom:1px solid #a9aeb4"></div>
<div class="t" style="left:0;width:25px;text-align:center;top:464px;font-size:13px;color:#27313c">23</div>
<div class="abs" style="left:0;top:480px;width:25px;height:20px;background:#dfe3e8;border-bottom:1px solid #a9aeb4"></div>
<div class="t" style="left:0;width:25px;text-align:center;top:484px;font-size:13px;color:#27313c">24</div>
<div class="abs" style="left:0;top:500px;width:25px;height:20px;background:#dfe3e8;border-bottom:1px solid #a9aeb4"></div>
<div class="t" style="left:0;width:25px;text-align:center;top:504px;font-size:13px;color:#27313c">25</div>
<div class="abs" style="left:138px;top:20px;width:1px;height:480px;background:#dadcdf"></div>
<div class="abs" style="left:237px;top:20px;width:1px;height:480px;background:#dadcdf"></div>
<div class="abs" style="left:342px;top:20px;width:1px;height:480px;background:#dadcdf"></div>
<div class="abs" style="left:423px;top:20px;width:1px;height:480px;background:#dadcdf"></div>
<div class="abs" style="left:569px;top:20px;width:1px;height:480px;background:#dadcdf"></div>
<div class="abs" style="left:699px;top:20px;width:1px;height:480px;background:#dadcdf"></div>
<div class="abs" style="left:741px;top:20px;width:1px;height:480px;background:#dadcdf"></div>
<div class="abs" style="left:25px;top:20px;width:1px;height:480px;background:#a9aeb4"></div>
<div class="abs" style="left:26px;top:39px;width:715px;height:1px;background:#dadcdf"></div>
<div class="abs" style="left:26px;top:59px;width:715px;height:1px;background:#dadcdf"></div>
<div class="abs" style="left:26px;top:79px;width:715px;height:1px;background:#dadcdf"></div>
<div class="abs" style="left:26px;top:99px;width:715px;height:1px;background:#dadcdf"></div>
<div class="abs" style="left:26px;top:119px;width:715px;height:1px;background:#dadcdf"></div>
<div class="abs" style="left:26px;top:139px;width:715px;height:1px;background:#dadcdf"></div>
<div class="abs" style="left:26px;top:159px;width:715px;height:1px;background:#dadcdf"></div>
<div class="abs" style="left:26px;top:179px;width:715px;height:1px;background:#dadcdf"></div>
<div class="abs" style="left:26px;top:199px;width:715px;height:1px;background:#dadcdf"></div>
<div class="abs" style="left:26px;top:219px;width:715px;height:1px;background:#dadcdf"></div>
<div class="abs" style="left:26px;top:239px;width:715px;height:1px;background:#dadcdf"></div>
<div class="abs" style="left:26px;top:259px;width:715px;height:1px;background:#dadcdf"></div>
<div class="abs" style="left:26px;top:279px;width:715px;height:1px;background:#dadcdf"></div>
<div class="abs" style="left:26px;top:299px;width:715px;height:1px;background:#dadcdf"></div>
<div class="abs" style="left:26px;top:319px;width:715px;height:1px;background:#dadcdf"></div>
<div class="abs" style="left:26px;top:339px;width:715px;height:1px;background:#dadcdf"></div>
<div class="abs" style="left:26px;top:359px;width:715px;height:1px;background:#dadcdf"></div>
<div class="abs" style="left:26px;top:379px;width:715px;height:1px;background:#dadcdf"></div>
<div class="abs" style="left:26px;top:399px;width:715px;height:1px;background:#dadcdf"></div>
<div class="abs" style="left:26px;top:419px;width:715px;height:1px;background:#dadcdf"></div>
<div class="abs" style="left:26px;top:439px;width:715px;height:1px;background:#dadcdf"></div>
<div class="abs" style="left:26px;top:459px;width:715px;height:1px;background:#dadcdf"></div>
<div class="abs" style="left:26px;top:479px;width:715px;height:1px;background:#dadcdf"></div>
<div class="abs" style="left:26px;top:499px;width:715px;height:1px;background:#dadcdf"></div>
<div class="abs" style="left:26px;top:519px;width:715px;height:1px;background:#dadcdf"></div>
<div class="abs" style="left:26px;top:79px;width:113px;height:21px;background:#ffc000"></div>
<div class="abs" style="left:139px;top:79px;width:99px;height:21px;background:#ffc000"></div>
<div class="abs" style="left:238px;top:79px;width:105px;height:21px;background:#ffc000"></div>
<div class="abs" style="left:343px;top:79px;width:81px;height:21px;background:#ffc000"></div>
<div class="abs" style="left:424px;top:79px;width:146px;height:21px;background:#ffc000"></div>
<div class="abs" style="left:26px;top:99px;width:113px;height:21px;background:#92d050"></div>
<div class="abs" style="left:139px;top:99px;width:99px;height:21px;background:#dce6f1"></div>
<div class="abs" style="left:238px;top:99px;width:105px;height:21px;background:#dce6f1"></div>
<div class="abs" style="left:343px;top:99px;width:81px;height:21px;background:#dce6f1"></div>
<div class="abs" style="left:424px;top:99px;width:146px;height:21px;background:#dce6f1"></div>
<div class="abs" style="left:26px;top:119px;width:113px;height:21px;background:#92d050"></div>
<div class="abs" style="left:139px;top:119px;width:99px;height:21px;background:#fff"></div>
<div class="abs" style="left:238px;top:119px;width:105px;height:21px;background:#fff"></div>
<div class="abs" style="left:343px;top:119px;width:81px;height:21px;background:#fff"></div>
<div class="abs" style="left:424px;top:119px;width:146px;height:21px;background:#fff"></div>
<div class="abs" style="left:26px;top:139px;width:113px;height:21px;background:#92d050"></div>
<div class="abs" style="left:139px;top:139px;width:99px;height:21px;background:#dce6f1"></div>
<div class="abs" style="left:238px;top:139px;width:105px;height:21px;background:#dce6f1"></div>
<div class="abs" style="left:343px;top:139px;width:81px;height:21px;background:#dce6f1"></div>
<div class="abs" style="left:424px;top:139px;width:146px;height:21px;background:#dce6f1"></div>
<div class="abs" style="left:26px;top:159px;width:113px;height:21px;background:#92d050"></div>
<div class="abs" style="left:139px;top:159px;width:99px;height:21px;background:#fff"></div>
<div class="abs" style="left:238px;top:159px;width:105px;height:21px;background:#fff"></div>
<div class="abs" style="left:343px;top:159px;width:81px;height:21px;background:#fff"></div>
<div class="abs" style="left:424px;top:159px;width:146px;height:21px;background:#fff"></div>
<div class="abs" style="left:26px;top:179px;width:113px;height:21px;background:#92d050"></div>
<div class="abs" style="left:139px;top:179px;width:99px;height:21px;background:#dce6f1"></div>
<div class="abs" style="left:238px;top:179px;width:105px;height:21px;background:#dce6f1"></div>
<div class="abs" style="left:343px;top:179px;width:81px;height:21px;background:#dce6f1"></div>
<div class="abs" style="left:424px;top:179px;width:146px;height:21px;background:#dce6f1"></div>
<div class="abs" style="left:26px;top:199px;width:113px;height:21px;background:#92d050"></div>
<div class="abs" style="left:139px;top:199px;width:99px;height:21px;background:#fff"></div>
<div class="abs" style="left:238px;top:199px;width:105px;height:21px;background:#fff"></div>
<div class="abs" style="left:343px;top:199px;width:81px;height:21px;background:#fff"></div>
<div class="abs" style="left:424px;top:199px;width:146px;height:21px;background:#fff"></div>
<div class="abs" style="left:26px;top:219px;width:113px;height:21px;background:#92d050"></div>
<div class="abs" style="left:139px;top:219px;width:99px;height:21px;background:#dce6f1"></div>
<div class="abs" style="left:238px;top:219px;width:105px;height:21px;background:#dce6f1"></div>
<div class="abs" style="left:343px;top:219px;width:81px;height:21px;background:#dce6f1"></div>
<div class="abs" style="left:424px;top:219px;width:146px;height:21px;background:#dce6f1"></div>
<div class="abs" style="left:26px;top:239px;width:113px;height:21px;background:#92d050"></div>
<div class="abs" style="left:139px;top:239px;width:99px;height:21px;background:#fff"></div>
<div class="abs" style="left:238px;top:239px;width:105px;height:21px;background:#fff"></div>
<div class="abs" style="left:343px;top:239px;width:81px;height:21px;background:#fff"></div>
<div class="abs" style="left:424px;top:239px;width:146px;height:21px;background:#fff"></div>
<div class="abs" style="left:26px;top:259px;width:113px;height:21px;background:#92d050"></div>
<div class="abs" style="left:139px;top:259px;width:99px;height:21px;background:#fff"></div>
<div class="abs" style="left:238px;top:259px;width:105px;height:21px;background:#fff"></div>
<div class="abs" style="left:343px;top:259px;width:81px;height:21px;background:#fff"></div>
<div class="abs" style="left:424px;top:259px;width:146px;height:21px;background:#fff"></div>
<div class="abs" style="left:26px;top:279px;width:113px;height:21px;background:#92d050"></div>
<div class="abs" style="left:139px;top:279px;width:99px;height:21px;background:#dce6f1"></div>
<div class="abs" style="left:238px;top:279px;width:105px;height:21px;background:#dce6f1"></div>
<div class="abs" style="left:343px;top:279px;width:81px;height:21px;background:#dce6f1"></div>
<div class="abs" style="left:424px;top:279px;width:146px;height:21px;background:#dce6f1"></div>
<div class="abs" style="left:26px;top:299px;width:113px;height:21px;background:#92d050"></div>
<div class="abs" style="left:139px;top:299px;width:99px;height:21px;background:#fff"></div>
<div class="abs" style="left:238px;top:299px;width:105px;height:21px;background:#fff"></div>
<div class="abs" style="left:343px;top:299px;width:81px;height:21px;background:#fff"></div>
<div class="abs" style="left:424px;top:299px;width:146px;height:21px;background:#fff"></div>
<div class="abs" style="left:26px;top:319px;width:113px;height:21px;background:#92d050"></div>
<div class="abs" style="left:139px;top:319px;width:99px;height:21px;background:#dce6f1"></div>
<div class="abs" style="left:238px;top:319px;width:105px;height:21px;background:#dce6f1"></div>
<div class="abs" style="left:343px;top:319px;width:81px;height:21px;background:#dce6f1"></div>
<div class="abs" style="left:424px;top:319px;width:146px;height:21px;background:#dce6f1"></div>
<div class="abs" style="left:26px;top:339px;width:113px;height:21px;background:#92d050"></div>
<div class="abs" style="left:139px;top:339px;width:99px;height:21px;background:#fff"></div>
<div class="abs" style="left:238px;top:339px;width:105px;height:21px;background:#fff"></div>
<div class="abs" style="left:343px;top:339px;width:81px;height:21px;background:#fff"></div>
<div class="abs" style="left:424px;top:339px;width:146px;height:21px;background:#fff"></div>
<div class="abs" style="left:26px;top:359px;width:113px;height:21px;background:#92d050"></div>
<div class="abs" style="left:139px;top:359px;width:99px;height:21px;background:#dce6f1"></div>
<div class="abs" style="left:238px;top:359px;width:105px;height:21px;background:#dce6f1"></div>
<div class="abs" style="left:343px;top:359px;width:81px;height:21px;background:#dce6f1"></div>
<div class="abs" style="left:424px;top:359px;width:146px;height:21px;background:#dce6f1"></div>
<div class="abs" style="left:26px;top:379px;width:113px;height:21px;background:#92d050"></div>
<div class="abs" style="left:139px;top:379px;width:99px;height:21px;background:#fff"></div>
<div class="abs" style="left:238px;top:379px;width:105px;height:21px;background:#fff"></div>
<div class="abs" style="left:343px;top:379px;width:81px;height:21px;background:#fff"></div>
<div class="abs" style="left:424px;top:379px;width:146px;height:21px;background:#fff"></div>
<div class="abs" style="left:26px;top:399px;width:113px;height:21px;background:#92d050"></div>
<div class="abs" style="left:139px;top:399px;width:99px;height:21px;background:#dce6f1"></div>
<div class="abs" style="left:238px;top:399px;width:105px;height:21px;background:#dce6f1"></div>
<div class="abs" style="left:343px;top:399px;width:81px;height:21px;background:#dce6f1"></div>
<div class="abs" style="left:424px;top:399px;width:146px;height:21px;background:#dce6f1"></div>
<div class="abs" style="left:26px;top:419px;width:113px;height:21px;background:#92d050"></div>
<div class="abs" style="left:139px;top:419px;width:99px;height:21px;background:#fff"></div>
<div class="abs" style="left:238px;top:419px;width:105px;height:21px;background:#fff"></div>
<div class="abs" style="left:343px;top:419px;width:81px;height:21px;background:#fff"></div>
<div class="abs" style="left:424px;top:419px;width:146px;height:21px;background:#fff"></div>
<div class="abs" style="left:26px;top:439px;width:113px;height:21px;background:#92d050"></div>
<div class="abs" style="left:139px;top:439px;width:99px;height:21px;background:#dce6f1"></div>
<div class="abs" style="left:238px;top:439px;width:105px;height:21px;background:#dce6f1"></div>
<div class="abs" style="left:343px;top:439px;width:81px;height:21px;background:#dce6f1"></div>
<div class="abs" style="left:424px;top:439px;width:146px;height:21px;background:#dce6f1"></div>
<div class="abs" style="left:26px;top:459px;width:113px;height:21px;background:#92d050"></div>
<div class="abs" style="left:139px;top:459px;width:99px;height:21px;background:#fff"></div>
<div class="abs" style="left:238px;top:459px;width:105px;height:21px;background:#fff"></div>
<div class="abs" style="left:343px;top:459px;width:81px;height:21px;background:#fff"></div>
<div class="abs" style="left:424px;top:459px;width:146px;height:21px;background:#fff"></div>
<div class="abs" style="left:26px;top:479px;width:113px;height:21px;background:#92d050"></div>
<div class="abs" style="left:139px;top:479px;width:99px;height:21px;background:#dce6f1"></div>
<div class="abs" style="left:238px;top:479px;width:105px;height:21px;background:#dce6f1"></div>
<div class="abs" style="left:343px;top:479px;width:81px;height:21px;background:#dce6f1"></div>
<div class="abs" style="left:424px;top:479px;width:146px;height:21px;background:#dce6f1"></div>
<div class="abs" style="left:138px;top:79px;width:1px;height:422px;background:#000"></div>
<div class="abs" style="left:237px;top:79px;width:1px;height:422px;background:#000"></div>
<div class="abs" style="left:342px;top:79px;width:1px;height:422px;background:#000"></div>
<div class="abs" style="left:423px;top:79px;width:1px;height:422px;background:#000"></div>
<div class="abs" style="left:569px;top:79px;width:1px;height:422px;background:#000"></div>
<div class="abs" style="left:26px;top:79px;width:544px;height:1px;background:#000"></div>
<div class="abs" style="left:26px;top:99px;width:544px;height:1px;background:#000"></div>
<div class="abs" style="left:26px;top:119px;width:544px;height:1px;background:#000"></div>
<div class="abs" style="left:26px;top:139px;width:544px;height:1px;background:#000"></div>
<div class="abs" style="left:26px;top:159px;width:544px;height:1px;background:#000"></div>
<div class="abs" style="left:26px;top:179px;width:544px;height:1px;background:#000"></div>
<div class="abs" style="left:26px;top:199px;width:544px;height:1px;background:#000"></div>
<div class="abs" style="left:26px;top:219px;width:544px;height:1px;background:#000"></div>
<div class="abs" style="left:26px;top:239px;width:544px;height:1px;background:#000"></div>
<div class="abs" style="left:26px;top:259px;width:544px;height:1px;background:#000"></div>
<div class="abs" style="left:26px;top:279px;width:544px;height:1px;background:#000"></div>
<div class="abs" style="left:26px;top:299px;width:544px;height:1px;background:#000"></div>
<div class="abs" style="left:26px;top:319px;width:544px;height:1px;background:#000"></div>
<div class="abs" style="left:26px;top:339px;width:544px;height:1px;background:#000"></div>
<div class="abs" style="left:26px;top:359px;width:544px;height:1px;background:#000"></div>
<div class="abs" style="left:26px;top:379px;width:544px;height:1px;background:#000"></div>
<div class="abs" style="left:26px;top:399px;width:544px;height:1px;background:#000"></div>
<div class="abs" style="left:26px;top:419px;width:544px;height:1px;background:#000"></div>
<div class="abs" style="left:26px;top:439px;width:544px;height:1px;background:#000"></div>
<div class="abs" style="left:26px;top:459px;width:544px;height:1px;background:#000"></div>
<div class="abs" style="left:26px;top:479px;width:544px;height:1px;background:#000"></div>
<div class="abs" style="left:26px;top:499px;width:544px;height:1px;background:#000"></div>
<div class="t" style="left:26px;width:113px;text-align:center;top:84px;font-size:13.3px;color:#fff;font-weight:700;-webkit-text-stroke:0">Наименование</div>
<div class="t" style="left:139px;width:99px;text-align:center;top:84px;font-size:13.3px;color:#fff;font-weight:700;-webkit-text-stroke:0">Дата</div>
<div class="t" style="left:238px;width:105px;text-align:center;top:84px;font-size:13.3px;color:#fff;font-weight:700;-webkit-text-stroke:0">Количество</div>
<div class="t" style="left:343px;width:81px;text-align:center;top:84px;font-size:13.3px;color:#fff;font-weight:700;-webkit-text-stroke:0">Цена</div>
<div class="t" style="left:424px;width:146px;text-align:center;top:84px;font-size:13.3px;color:#fff;font-weight:700;-webkit-text-stroke:0">Сумма</div>
<div class="t" style="left:28px;top:104px;font-size:13.5px;color:#000;font-weight:400">Картофель</div>
<div class="t" style="left:139px;width:99px;text-align:center;top:104px;font-size:13px;color:#000;font-weight:400">30.04.2015</div>
<div class="t" style="left:238px;width:105px;text-align:center;top:104px;font-size:13px;color:#000;font-weight:400">234</div>
<div class="t" style="left:343px;width:81px;text-align:center;top:104px;font-size:13px;color:#000;font-weight:400">45</div>
<div class="t" style="left:424px;width:146px;text-align:center;top:104px;font-size:13px;color:#000;font-weight:400">10526</div>
<div class="t" style="left:28px;top:124px;font-size:13.5px;color:#000;font-weight:400">Картофель</div>
<div class="t" style="left:139px;width:99px;text-align:center;top:124px;font-size:13px;color:#000;font-weight:400">30.04.2015</div>
<div class="t" style="left:238px;width:105px;text-align:center;top:124px;font-size:13px;color:#000;font-weight:400">234</div>
<div class="t" style="left:343px;width:81px;text-align:center;top:124px;font-size:13px;color:#000;font-weight:400">45</div>
<div class="t" style="left:424px;width:146px;text-align:center;top:124px;font-size:13px;color:#000;font-weight:400">10526</div>
<div class="t" style="left:28px;top:144px;font-size:13.5px;color:#000;font-weight:400">Картофель</div>
<div class="t" style="left:139px;width:99px;text-align:center;top:144px;font-size:13px;color:#000;font-weight:400">30.04.2015</div>
<div class="t" style="left:238px;width:105px;text-align:center;top:144px;font-size:13px;color:#000;font-weight:400">234</div>
<div class="t" style="left:343px;width:81px;text-align:center;top:144px;font-size:13px;color:#000;font-weight:400">45</div>
<div class="t" style="left:424px;width:146px;text-align:center;top:144px;font-size:13px;color:#000;font-weight:400">10526</div>
<div class="t" style="left:28px;top:164px;font-size:13.5px;color:#000;font-weight:400">Картофель</div>
<div class="t" style="left:139px;width:99px;text-align:center;top:164px;font-size:13px;color:#000;font-weight:400">30.04.2015</div>
<div class="t" style="left:238px;width:105px;text-align:center;top:164px;font-size:13px;color:#000;font-weight:400">234</div>
<div class="t" style="left:343px;width:81px;text-align:center;top:164px;font-size:13px;color:#000;font-weight:400">45</div>
<div class="t" style="left:424px;width:146px;text-align:center;top:164px;font-size:13px;color:#000;font-weight:400">10526</div>
<div class="t" style="left:28px;top:184px;font-size:13.5px;color:#000;font-weight:400">Картофель</div>
<div class="t" style="left:139px;width:99px;text-align:center;top:184px;font-size:13px;color:#000;font-weight:400">30.04.2015</div>
<div class="t" style="left:238px;width:105px;text-align:center;top:184px;font-size:13px;color:#000;font-weight:400">234</div>
<div class="t" style="left:343px;width:81px;text-align:center;top:184px;font-size:13px;color:#000;font-weight:400">45</div>
<div class="t" style="left:424px;width:146px;text-align:center;top:184px;font-size:13px;color:#000;font-weight:400">10526</div>
<div class="t" style="left:28px;top:204px;font-size:13.5px;color:#000;font-weight:400">Картофель</div>
<div class="t" style="left:139px;width:99px;text-align:center;top:204px;font-size:13px;color:#000;font-weight:400">30.04.2015</div>
<div class="t" style="left:238px;width:105px;text-align:center;top:204px;font-size:13px;color:#000;font-weight:400">234</div>
<div class="t" style="left:343px;width:81px;text-align:center;top:204px;font-size:13px;color:#000;font-weight:400">45</div>
<div class="t" style="left:424px;width:146px;text-align:center;top:204px;font-size:13px;color:#000;font-weight:400">10526</div>
<div class="t" style="left:28px;top:224px;font-size:13.5px;color:#000;font-weight:400">Картофель</div>
<div class="t" style="left:139px;width:99px;text-align:center;top:224px;font-size:13px;color:#000;font-weight:400">30.04.2015</div>
<div class="t" style="left:238px;width:105px;text-align:center;top:224px;font-size:13px;color:#000;font-weight:400">234</div>
<div class="t" style="left:343px;width:81px;text-align:center;top:224px;font-size:13px;color:#000;font-weight:400">45</div>
<div class="t" style="left:424px;width:146px;text-align:center;top:224px;font-size:13px;color:#000;font-weight:400">10526</div>
<div class="t" style="left:28px;top:244px;font-size:13.5px;color:#000;font-weight:400">Картофель</div>
<div class="t" style="left:139px;width:99px;text-align:center;top:244px;font-size:13px;color:#000;font-weight:400">30.04.2015</div>
<div class="t" style="left:238px;width:105px;text-align:center;top:244px;font-size:13px;color:#000;font-weight:400">234</div>
<div class="t" style="left:343px;width:81px;text-align:center;top:244px;font-size:13px;color:#000;font-weight:400">45</div>
<div class="t" style="left:424px;width:146px;text-align:center;top:244px;font-size:13px;color:#000;font-weight:400">10526</div>
<div class="t" style="left:28px;top:264px;font-size:13.5px;color:#000;font-weight:400">Мясо</div>
<div class="t" style="left:139px;width:99px;text-align:center;top:264px;font-size:13px;color:#000;font-weight:400">30.04.2016</div>
<div class="t" style="left:238px;width:105px;text-align:center;top:264px;font-size:13px;color:#000;font-weight:400">91</div>
<div class="t" style="left:343px;width:81px;text-align:center;top:264px;font-size:13px;color:#000;font-weight:400">236</div>
<div class="t" style="left:424px;width:146px;text-align:center;top:264px;font-size:13px;color:#000;font-weight:400">21546</div>
<div class="t" style="left:28px;top:284px;font-size:13.5px;color:#000;font-weight:400">Мясо</div>
<div class="t" style="left:139px;width:99px;text-align:center;top:284px;font-size:13px;color:#000;font-weight:400">30.04.2016</div>
<div class="t" style="left:238px;width:105px;text-align:center;top:284px;font-size:13px;color:#000;font-weight:400">91</div>
<div class="t" style="left:343px;width:81px;text-align:center;top:284px;font-size:13px;color:#000;font-weight:400">236</div>
<div class="t" style="left:424px;width:146px;text-align:center;top:284px;font-size:13px;color:#000;font-weight:400">21546</div>
<div class="t" style="left:28px;top:304px;font-size:13.5px;color:#000;font-weight:400">Мясо</div>
<div class="t" style="left:139px;width:99px;text-align:center;top:304px;font-size:13px;color:#000;font-weight:400">30.04.2016</div>
<div class="t" style="left:238px;width:105px;text-align:center;top:304px;font-size:13px;color:#000;font-weight:400">91</div>
<div class="t" style="left:343px;width:81px;text-align:center;top:304px;font-size:13px;color:#000;font-weight:400">236</div>
<div class="t" style="left:424px;width:146px;text-align:center;top:304px;font-size:13px;color:#000;font-weight:400">21546</div>
<div class="t" style="left:28px;top:324px;font-size:13.5px;color:#000;font-weight:400">Мясо</div>
<div class="t" style="left:139px;width:99px;text-align:center;top:324px;font-size:13px;color:#000;font-weight:400">30.04.2016</div>
<div class="t" style="left:238px;width:105px;text-align:center;top:324px;font-size:13px;color:#000;font-weight:400">91</div>
<div class="t" style="left:343px;width:81px;text-align:center;top:324px;font-size:13px;color:#000;font-weight:400">236</div>
<div class="t" style="left:424px;width:146px;text-align:center;top:324px;font-size:13px;color:#000;font-weight:400">21546</div>
<div class="t" style="left:28px;top:344px;font-size:13.5px;color:#000;font-weight:400">Мясо</div>
<div class="t" style="left:139px;width:99px;text-align:center;top:344px;font-size:13px;color:#000;font-weight:400">30.04.2016</div>
<div class="t" style="left:238px;width:105px;text-align:center;top:344px;font-size:13px;color:#000;font-weight:400">91</div>
<div class="t" style="left:343px;width:81px;text-align:center;top:344px;font-size:13px;color:#000;font-weight:400">236</div>
<div class="t" style="left:424px;width:146px;text-align:center;top:344px;font-size:13px;color:#000;font-weight:400">21546</div>
<div class="t" style="left:28px;top:364px;font-size:13.5px;color:#000;font-weight:400">Мясо</div>
<div class="t" style="left:139px;width:99px;text-align:center;top:364px;font-size:13px;color:#000;font-weight:400">30.04.2016</div>
<div class="t" style="left:238px;width:105px;text-align:center;top:364px;font-size:13px;color:#000;font-weight:400">91</div>
<div class="t" style="left:343px;width:81px;text-align:center;top:364px;font-size:13px;color:#000;font-weight:400">236</div>
<div class="t" style="left:424px;width:146px;text-align:center;top:364px;font-size:13px;color:#000;font-weight:400">21546</div>
<div class="t" style="left:28px;top:384px;font-size:13.5px;color:#000;font-weight:400">Мясо</div>
<div class="t" style="left:139px;width:99px;text-align:center;top:384px;font-size:13px;color:#000;font-weight:400">30.04.2016</div>
<div class="t" style="left:238px;width:105px;text-align:center;top:384px;font-size:13px;color:#000;font-weight:400">91</div>
<div class="t" style="left:343px;width:81px;text-align:center;top:384px;font-size:13px;color:#000;font-weight:400">236</div>
<div class="t" style="left:424px;width:146px;text-align:center;top:384px;font-size:13px;color:#000;font-weight:400">21546</div>
<div class="t" style="left:28px;top:404px;font-size:13.5px;color:#000;font-weight:400">Мясо</div>
<div class="t" style="left:139px;width:99px;text-align:center;top:404px;font-size:13px;color:#000;font-weight:400">30.04.2016</div>
<div class="t" style="left:238px;width:105px;text-align:center;top:404px;font-size:13px;color:#000;font-weight:400">91</div>
<div class="t" style="left:343px;width:81px;text-align:center;top:404px;font-size:13px;color:#000;font-weight:400">236</div>
<div class="t" style="left:424px;width:146px;text-align:center;top:404px;font-size:13px;color:#000;font-weight:400">21546</div>
<div class="t" style="left:28px;top:424px;font-size:13.5px;color:#000;font-weight:400">Мясо</div>
<div class="t" style="left:139px;width:99px;text-align:center;top:424px;font-size:13px;color:#000;font-weight:400">30.04.2016</div>
<div class="t" style="left:238px;width:105px;text-align:center;top:424px;font-size:13px;color:#000;font-weight:400">91</div>
<div class="t" style="left:343px;width:81px;text-align:center;top:424px;font-size:13px;color:#000;font-weight:400">236</div>
<div class="t" style="left:424px;width:146px;text-align:center;top:424px;font-size:13px;color:#000;font-weight:400">21546</div>
<div class="t" style="left:28px;top:444px;font-size:13.5px;color:#000;font-weight:400">Рыба</div>
<div class="t" style="left:139px;width:99px;text-align:center;top:444px;font-size:13px;color:#000;font-weight:400">30.04.2016</div>
<div class="t" style="left:238px;width:105px;text-align:center;top:444px;font-size:13px;color:#000;font-weight:400">60</div>
<div class="t" style="left:343px;width:81px;text-align:center;top:444px;font-size:13px;color:#000;font-weight:400">289</div>
<div class="t" style="left:424px;width:146px;text-align:center;top:444px;font-size:13px;color:#000;font-weight:400">15461</div>
<div class="t" style="left:28px;top:464px;font-size:13.5px;color:#000;font-weight:400">Рыба</div>
<div class="t" style="left:139px;width:99px;text-align:center;top:464px;font-size:13px;color:#000;font-weight:400">30.04.2016</div>
<div class="t" style="left:238px;width:105px;text-align:center;top:464px;font-size:13px;color:#000;font-weight:400">60</div>
<div class="t" style="left:343px;width:81px;text-align:center;top:464px;font-size:13px;color:#000;font-weight:400">289</div>
<div class="t" style="left:424px;width:146px;text-align:center;top:464px;font-size:13px;color:#000;font-weight:400">15461</div>
<div class="t" style="left:28px;top:484px;font-size:13.5px;color:#000;font-weight:400">Рыба</div>
<div class="t" style="left:139px;width:99px;text-align:center;top:484px;font-size:13px;color:#000;font-weight:400">30.04.2016</div>
<div class="t" style="left:238px;width:105px;text-align:center;top:484px;font-size:13px;color:#000;font-weight:400">60</div>
<div class="t" style="left:343px;width:81px;text-align:center;top:484px;font-size:13px;color:#000;font-weight:400">289</div>
<div class="t" style="left:424px;width:146px;text-align:center;top:484px;font-size:13px;color:#000;font-weight:400">15461</div>
<div class="t" style="left:254px;top:44px;font-size:13.6px;color:#000">Реализация продуктов питания</div>
<div class="abs" style="left:236px;top:38px;width:108px;height:23px;border:3px solid #000"></div>
<div class="abs" style="left:340px;top:57px;width:6px;height:6px;background:#000;border:1px solid #fff"></div>
</div>
<div class="abs" style="left:781px;top:199px;width:17px;height:494px;background:linear-gradient(90deg,#e3e6ea,#eef0f3);border-left:1px solid #c7ccd2"></div>
<div class="abs" style="left:783px;top:199px;width:14px;height:8px;background:#fff;border:1px solid #8f969e"></div>
<div class="abs" style="left:786px;top:202px;width:8px;height:1px;background:#555"></div>
<svg class="abs" style="left:783px;top:211px" width="11" height="7" viewBox="0 0 11 7"><path d="M0 6h10L5 0z" fill="#3d4249"/></svg>
<div class="abs" style="left:782px;top:224px;width:14px;height:100px;background:linear-gradient(90deg,#fafbfc,#e6eaee);border:1px solid #9aa2ab;border-radius:2px"></div>
<svg class="abs" style="left:785px;top:268px" width="8" height="7" viewBox="0 0 8 7"><path d="M0 0.5h8M0 2.5h8M0 4.5h8M0 6.5h8" stroke="#6a7078"/></svg>
<svg class="abs" style="left:783px;top:680px" width="11" height="7" viewBox="0 0 11 7"><path d="M0 0h10L5 6z" fill="#3d4249"/></svg>
<div class="abs" style="left:797px;top:83px;width:1px;height:648px;background:#66707b"></div>
<div class="abs" style="left:798px;top:83px;width:1px;height:648px;background:#dae7f6"></div>
<div class="abs" style="left:38px;top:83px;width:1px;height:648px;background:#dae7f6"></div>
<div class="abs" style="left:39px;top:692px;width:759px;height:17px;background:linear-gradient(#e9ecef,#dde1e6);border-top:1px solid #a9aeb4"></div>
<svg class="abs" style="left:45px;top:696px" width="8" height="8" viewBox="0 0 8 8"><rect x="0" y="0" width="1.6" height="8" fill="#3d4249"/><path d="M8 0v8L2 4z" fill="#3d4249"/></svg>
<svg class="abs" style="left:61px;top:696px" width="6" height="8" viewBox="0 0 6 8"><path d="M6 0v8L0 4z" fill="#3d4249"/></svg>
<svg class="abs" style="left:76px;top:696px" width="6" height="8" viewBox="0 0 6 8"><path d="M0 0v8L6 4z" fill="#3d4249"/></svg>
<svg class="abs" style="left:89px;top:696px" width="8" height="8" viewBox="0 0 8 8"><path d="M0 0v8L6 4z" fill="#3d4249"/><rect x="6.4" y="0" width="1.6" height="8" fill="#3d4249"/></svg>
<svg class="abs" style="left:102px;top:691px" width="380" height="18" viewBox="0 0 380 18"><path d="M0.5 0 V16.5 H131 L147 0" fill="#fff" stroke="#9aa0a8"/><path d="M130 16.5 L146 0.5 M148 16.5 H203 L219 0.5 M217 16.5 H271 L287 0.5 M285 16.5 H336 L352 0.5 M352 16.5 H355 L371 0.5" fill="none" stroke="#a0a6ae"/></svg>
<div class="t" style="left:113px;top:695px;font-size:12.6px;font-weight:700;color:#3a3f58">Продукты питания</div>
<div class="t" style="left:251px;top:695px;font-size:11.7px;color:#4a4f58">Таблица</div>
<div class="t" style="left:318px;top:695px;font-size:12px;color:#4a4f58">Рассчет</div>
<div class="t" style="left:384px;top:695px;font-size:11.5px;color:#4a4f58">Вывод</div>
<svg class="abs" style="left:441px;top:694px" width="15" height="13" viewBox="0 0 15 13"><rect x="3.5" y="4.5" width="11" height="8" rx="1" fill="#e8eef8" stroke="#4a6ab0"/><circle cx="4" cy="4" r="3" fill="#f5c030"/></svg>
<div class="abs" style="left:485px;top:693px;width:8px;height:14px;background:#fff;border:1px solid #9aa0a8"></div>
<div class="abs" style="left:488px;top:696px;width:1px;height:8px;background:#555"></div>
<svg class="abs" style="left:497px;top:695px" width="6" height="9" viewBox="0 0 6 9"><path d="M6 0v9L0 4.5z" fill="#3d4249"/></svg>
<div class="abs" style="left:510px;top:693px;width:215px;height:15px;background:linear-gradient(#fbfcfd,#e9ecef);border:1px solid #9aa2ab;border-radius:2px"></div>
<svg class="abs" style="left:614px;top:697px" width="8" height="8" viewBox="0 0 8 8"><path d="M0.5 0v8M2.5 0v8M4.5 0v8M6.5 0v8" stroke="#7a8088"/></svg>
<svg class="abs" style="left:761px;top:695px" width="6" height="9" viewBox="0 0 6 9"><path d="M0 0v9L6 4.5z" fill="#3d4249"/></svg>
<div class="abs" style="left:772px;top:693px;width:8px;height:14px;background:#fff;border:1px solid #9aa0a8"></div>
<div class="abs" style="left:775px;top:696px;width:1px;height:8px;background:#555"></div>
<div class="abs" style="left:39px;top:708px;width:759px;height:23px;background:linear-gradient(#e6e9ed,#dadee3 60%,#cfd4da);border-top:1px solid #a9aeb4;border-bottom:1px solid #8f969e"></div>
<div class="t" style="left:48px;top:714px;font-size:11.8px;color:#444">Готово</div>
<div class="abs" style="left:94px;top:711px;width:1px;height:17px;background:#b8bdc4"></div>
<svg class="abs" style="left:104px;top:712px" width="15" height="13" viewBox="0 0 15 13"><rect x="1.5" y="1.5" width="13" height="11" fill="#fff" stroke="#3a5aa8"/><rect x="2" y="2" width="12" height="2" fill="#5a86d0"/><path d="M4 6h3M8 6h5M4 8h3M8 8h5M4 10h3M8 10h5" stroke="#5a86d0"/><circle cx="3" cy="3" r="2.5" fill="#e03030"/></svg>
<div class="abs" style="left:125px;top:711px;width:1px;height:17px;background:#b8bdc4"></div>
<div class="abs" style="left:541px;top:711px;width:1px;height:17px;background:#b8bdc4"></div>
<div class="abs" style="left:545px;top:710px;width:19px;height:19px;background:linear-gradient(#fde9a8,#fbd46a);border:1px solid #d0a040;border-radius:3px"></div>
<svg class="abs" style="left:548px;top:713px" width="13" height="12" viewBox="0 0 13 12"><rect x="0.5" y="0.5" width="12" height="11" fill="#fff" stroke="#555"/><path d="M0.5 4h12M0.5 8h12M4.5 0.5v11M8.5 0.5v11" stroke="#555"/></svg>
<svg class="abs" style="left:566px;top:713px" width="14" height="12" viewBox="0 0 14 12"><rect x="0.5" y="0.5" width="13" height="11" fill="#c9ced4" stroke="#6a7078"/><rect x="4" y="2" width="6" height="8" fill="#fff" stroke="#6a7078"/></svg>
<svg class="abs" style="left:585px;top:713px" width="14" height="12" viewBox="0 0 14 12"><rect x="0.5" y="0.5" width="13" height="11" fill="#c9ced4" stroke="#6a7078"/><rect x="2" y="1" width="4" height="6" fill="#fff" stroke="#6a7078"/><rect x="7" y="1" width="4" height="6" fill="#fff" stroke="#6a7078"/></svg>
<div class="t" style="left:611px;top:714px;font-size:10.6px;color:#3a3f48">100%</div>
<svg class="abs" style="left:645px;top:710px" width="18" height="18" viewBox="0 0 18 18"><circle cx="9" cy="9" r="8" fill="url(#gz)" stroke="#7a8088"/><defs><linearGradient id="gz" x1="0" y1="0" x2="0" y2="1"><stop offset="0" stop-color="#fff"/><stop offset="1" stop-color="#dfe2e6"/></linearGradient></defs><rect x="5" y="8" width="8" height="2" fill="#333"/></svg>
<div class="abs" style="left:663px;top:718px;width:99px;height:1px;background:#8a9098"></div>
<div class="abs" style="left:663px;top:719px;width:99px;height:1px;background:#fff"></div>
<svg class="abs" style="left:708px;top:711px" width="9" height="12" viewBox="0 0 9 12"><path d="M0.5 0.5h8v7l-4 4-4-4z" fill="#fbfbfc" stroke="#7a8088"/></svg>
<svg class="abs" style="left:761px;top:710px" width="18" height="18" viewBox="0 0 18 18"><circle cx="9" cy="9" r="8" fill="url(#gz)" stroke="#7a8088"/><rect x="5" y="8" width="8" height="2" fill="#333"/><rect x="8" y="5" width="2" height="8" fill="#333"/></svg>
<svg class="abs" style="left:786px;top:719px" width="10" height="10" viewBox="0 0 10 10"><g fill="#a0a6ae"><rect x="8" y="0" width="2" height="2"/><rect x="4" y="4" width="2" height="2"/><rect x="8" y="4" width="2" height="2"/><rect x="0" y="8" width="2" height="2"/><rect x="4" y="8" width="2" height="2"/><rect x="8" y="8" width="2" height="2"/></g></svg>
<div class="abs" style="left:39px;top:83px;width:1px;height:648px;background:#66707b"></div>
<svg class="abs" style="left:0;top:0;z-index:10;filter:drop-shadow(2px 3px 2px rgba(0,0,0,.55))" width="837" height="770"><rect x="273.5" y="166.5" width="504" height="28" rx="11" fill="none" stroke="#ff0000" stroke-width="5"/><rect x="275.5" y="233.5" width="113" height="32" rx="10" fill="none" stroke="#ff0000" stroke-width="5"/></svg>
</div></body></html>
